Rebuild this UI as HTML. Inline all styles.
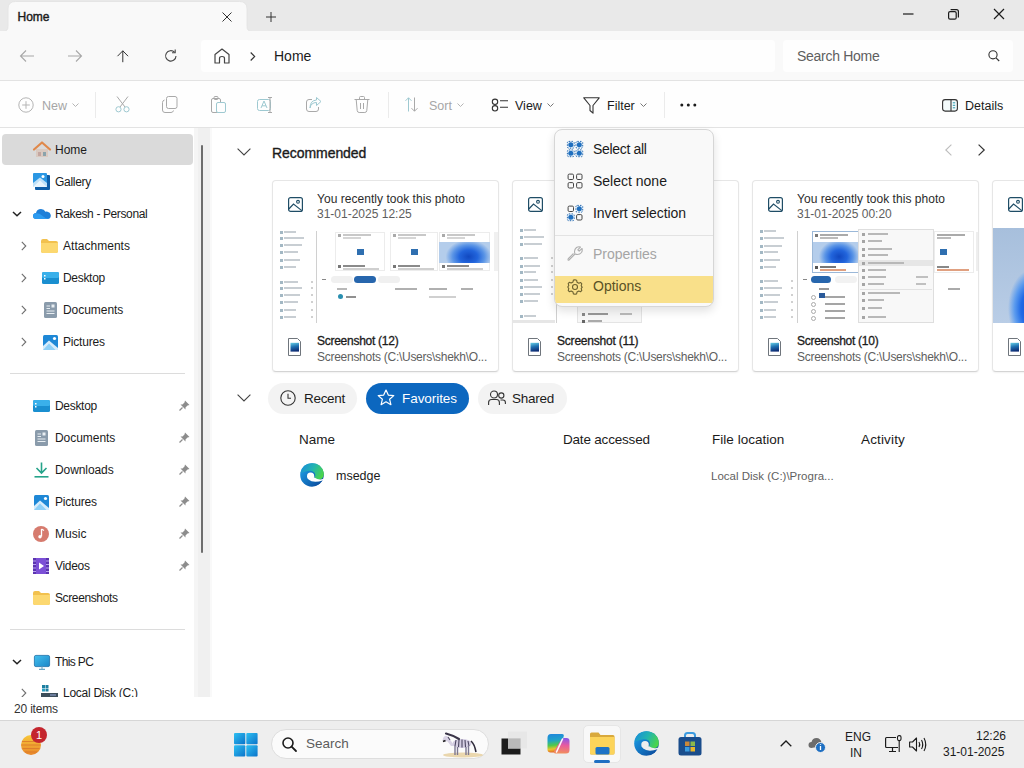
<!DOCTYPE html>
<html><head><meta charset="utf-8">
<style>
*{margin:0;padding:0;box-sizing:border-box}
html,body{width:1024px;height:768px;overflow:hidden;background:#fff;font-family:"Liberation Sans",sans-serif;color:#1b1b1b}
.a{position:absolute}
.t{position:absolute;white-space:nowrap;line-height:20px;height:20px}
svg{position:absolute;overflow:visible}
</style></head><body>

<!-- TAB BAR -->
<div class="a" style="left:0;top:0;width:1024px;height:31px;background:#e9e9e9"></div>
<svg style="left:0;top:0" width="260" height="32"><path d="M3 31.5Q8 31.5 8 26.5V9Q8 1.5 15.5 1.5H239.5Q247 1.5 247 9V26.5Q247 31.5 252 31.5Z" fill="#f9f9f9" stroke="#e2e2e2" stroke-width="0.8"/><rect x="0" y="31" width="260" height="2" fill="#f9f9f9"/></svg>
<div class="t" style="left:17.5px;top:7px;font-size:12px;-webkit-text-stroke:0.4px #1b1b1b;">Home</div>
<svg style="left:222px;top:11.5px" width="10" height="10"><path d="M0.5 0.5L9.5 9.5M9.5 0.5L0.5 9.5" stroke="#333" stroke-width="1"/></svg>
<svg style="left:265.5px;top:11.5px" width="10" height="10"><path d="M5 0V10M0 5H10" stroke="#333" stroke-width="1"/></svg>
<svg style="left:903px;top:13px" width="11" height="2"><path d="M0 1H10.5" stroke="#1b1b1b" stroke-width="1.2"/></svg>
<svg style="left:948px;top:9px" width="11" height="11"><rect x="0.6" y="2.6" width="7.6" height="7.6" rx="1.5" fill="none" stroke="#1b1b1b" stroke-width="1.2"/><path d="M2.6 0.6H8.5Q10.4 0.6 10.4 2.5V8.4" fill="none" stroke="#1b1b1b" stroke-width="1.2"/></svg>
<svg style="left:994px;top:9px" width="10" height="10"><path d="M0 0L10 10M10 0L0 10" stroke="#1b1b1b" stroke-width="1.2"/></svg>

<!-- NAV BAR -->
<div class="a" style="left:0;top:31px;width:1024px;height:49px;background:#f9f9f9"></div>
<div class="a" style="left:0;top:80px;width:1024px;height:1px;background:#e3e3e3"></div>
<svg style="left:20px;top:50px" width="14" height="12"><path d="M0.5 6H14M6 0.5L0.5 6L6 11.5" fill="none" stroke="#a8a8a8" stroke-width="1.1"/></svg>
<svg style="left:68px;top:50px" width="14" height="12"><path d="M0 6H13.5M8 0.5L13.5 6L8 11.5" fill="none" stroke="#a8a8a8" stroke-width="1.1"/></svg>
<svg style="left:116.5px;top:50px" width="12" height="13"><path d="M5.8 0.8V12.2M0.5 6.2L5.8 0.8L11.1 6.2" fill="none" stroke="#333" stroke-width="1"/></svg>
<svg style="left:164px;top:49px" width="14" height="14"><path d="M12 7A5.2 5.2 0 1 1 10.5 3.2" fill="none" stroke="#444" stroke-width="1.1"/><path d="M11.2 0.6V3.8H8" fill="none" stroke="#444" stroke-width="1.1"/></svg>
<div class="a" style="left:201px;top:40px;width:574px;height:32px;background:#fefefe;border-radius:4px"></div>
<svg style="left:214px;top:48px" width="16" height="16"><path d="M1 15V6.5L8 1L15 6.5V15H10.5V10.5Q10.5 8.5 8 8.5Q5.5 8.5 5.5 10.5V15Z" fill="none" stroke="#444" stroke-width="1.2" stroke-linejoin="round"/></svg>
<svg style="left:250px;top:52px" width="6" height="9"><path d="M0.7 0.5L4.7 4.5L0.7 8.5" fill="none" stroke="#333" stroke-width="1.1"/></svg>
<div class="t" style="left:274px;top:46px;font-size:14px;color:#1b1b1b">Home</div>
<div class="a" style="left:783px;top:40px;width:230px;height:32px;background:#fefefe;border-radius:4px"></div>
<div class="t" style="left:797px;top:46px;font-size:14px;color:#5f5f5f;letter-spacing:-0.281px;">Search Home</div>
<svg style="left:988px;top:50px" width="12" height="12"><circle cx="5" cy="4.8" r="4.1" fill="none" stroke="#333" stroke-width="1.1"/><path d="M8 7.8L11.2 11" stroke="#333" stroke-width="1.2"/></svg>

<!-- TOOLBAR -->
<div class="a" style="left:0;top:81px;width:1024px;height:46px;background:#fefefe"></div>
<div class="a" style="left:0;top:127px;width:1024px;height:1px;background:#e3e3e3"></div>

<svg style="left:18px;top:97px" width="16" height="16"><circle cx="8" cy="8" r="7.2" fill="none" stroke="#b5b5b5" stroke-width="1"/><path d="M8 4.2V11.8M4.2 8H11.8" stroke="#b5b5b5" stroke-width="1"/></svg>
<div class="t" style="left:42px;top:96px;font-size:12.5px;color:#a6a6a6">New</div>
<svg style="left:72px;top:103px" width="7" height="4"><path d="M0.5 0.5L3.5 3.5L6.5 0.5" fill="none" stroke="#b5b5b5" stroke-width="1"/></svg>
<div class="a" style="left:95px;top:92px;width:1px;height:26px;background:#ebebeb"></div>
<svg style="left:115px;top:96px" width="15" height="17"><path d="M2 0.5L10 11M13 0.5L5 11" stroke="#a9a9a9" stroke-width="1"/><circle cx="3.5" cy="13.3" r="2.6" fill="none" stroke="#9ec9d1" stroke-width="1"/><circle cx="11.5" cy="13.3" r="2.6" fill="none" stroke="#9ec9d1" stroke-width="1"/></svg>
<svg style="left:162px;top:96px" width="16" height="17"><rect x="4.5" y="0.5" width="10.5" height="12" rx="2" fill="none" stroke="#a9a9a9" stroke-width="1"/><path d="M2.5 4Q0.5 4.5 0.5 6.5V14Q0.5 16.5 3 16.5H9Q11 16.5 11.5 14.5" fill="none" stroke="#a9a9a9" stroke-width="1"/></svg>
<svg style="left:211px;top:96px" width="15" height="17"><rect x="0.5" y="2.5" width="9" height="14" rx="1.5" fill="none" stroke="#a9a9a9" stroke-width="1"/><rect x="5.5" y="6.5" width="9" height="10" rx="1.5" fill="#fefefe" stroke="#9ec9d1" stroke-width="1"/><rect x="3" y="0.5" width="4" height="3" rx="1" fill="none" stroke="#a9a9a9" stroke-width="1"/></svg>
<svg style="left:257px;top:97px" width="17" height="16"><rect x="0.5" y="2.5" width="13" height="11" rx="2" fill="none" stroke="#9ec9d1" stroke-width="1"/><path d="M4 11L7 4L10 11M5 8.8H9" fill="none" stroke="#9ec9d1" stroke-width="1"/><path d="M13 0.5V15.5M11 0.5H15M11 15.5H15" fill="none" stroke="#a9a9a9" stroke-width="1"/></svg>
<svg style="left:306px;top:97px" width="16" height="15"><path d="M6 2.5H3Q0.5 2.5 0.5 5V12Q0.5 14.5 3 14.5H10Q12.5 14.5 12.5 12V10" fill="none" stroke="#a9a9a9" stroke-width="1"/><path d="M4 11Q5 5.5 10.5 5.5V8.5L15 4.5L10.5 0.5V3Q4 3.5 4 11Z" fill="none" stroke="#9ec9d1" stroke-width="1"/></svg>
<svg style="left:354px;top:96px" width="16" height="17"><path d="M0.5 3.5H15.5M5.5 3.5V1.5Q5.5 0.5 6.5 0.5H9.5Q10.5 0.5 10.5 1.5V3.5M2.2 3.5L3.2 14.5Q3.4 16.5 5.2 16.5H10.8Q12.6 16.5 12.8 14.5L13.8 3.5M6.5 7V13M9.5 7V13" fill="none" stroke="#a9a9a9" stroke-width="1"/></svg>
<div class="a" style="left:388px;top:92px;width:1px;height:26px;background:#ebebeb"></div>
<svg style="left:405px;top:97px" width="13" height="15"><path d="M3.5 14.5V0.8M0.5 3.8L3.5 0.8L6.5 3.8" fill="none" stroke="#9ec9d1" stroke-width="1"/><path d="M9.5 0.5V14.2M6.5 11.2L9.5 14.2L12.5 11.2" fill="none" stroke="#a9a9a9" stroke-width="1"/></svg>
<div class="t" style="left:429px;top:96px;font-size:12.5px;color:#a6a6a6">Sort</div>
<svg style="left:457px;top:103px" width="7" height="4"><path d="M0.5 0.5L3.5 3.5L6.5 0.5" fill="none" stroke="#b5b5b5" stroke-width="1"/></svg>
<svg style="left:491px;top:98px" width="18" height="14"><circle cx="4" cy="3.8" r="2.7" fill="none" stroke="#333" stroke-width="1.1"/><circle cx="4" cy="10.3" r="2.7" fill="none" stroke="#333" stroke-width="1.1"/><path d="M9 2.8H17M9 9.3H17" stroke="#333" stroke-width="1.1"/></svg>
<div class="t" style="left:515px;top:96px;font-size:12.5px;color:#1b1b1b">View</div>
<svg style="left:547px;top:103px" width="7" height="4"><path d="M0.5 0.5L3.5 3.5L6.5 0.5" fill="none" stroke="#777" stroke-width="1"/></svg>
<svg style="left:583px;top:97px" width="17" height="17"><path d="M0.8 0.8H16.2L10 8.5V16.2L7 13.5V8.5Z" fill="none" stroke="#333" stroke-width="1.1" stroke-linejoin="round"/></svg>
<div class="t" style="left:607px;top:96px;font-size:12.5px;color:#1b1b1b">Filter</div>
<svg style="left:640px;top:103px" width="7" height="4"><path d="M0.5 0.5L3.5 3.5L6.5 0.5" fill="none" stroke="#777" stroke-width="1"/></svg>
<div class="a" style="left:664px;top:92px;width:1px;height:26px;background:#ebebeb"></div>
<svg style="left:680px;top:103px" width="17" height="4"><circle cx="1.8" cy="2" r="1.5" fill="#1b1b1b"/><circle cx="8.3" cy="2" r="1.5" fill="#1b1b1b"/><circle cx="14.8" cy="2" r="1.5" fill="#1b1b1b"/></svg>
<svg style="left:942px;top:99px" width="16" height="13"><rect x="0.6" y="0.6" width="14.8" height="11.5" rx="2.5" fill="#f3fafb" stroke="#333" stroke-width="1.1"/><path d="M9 0.6V12.1" stroke="#333" stroke-width="1.1"/><path d="M10.8 3.8H13.2M10.8 6.3H13.2M10.8 8.8H13.2" stroke="#2a9bb0" stroke-width="1"/></svg>
<div class="t" style="left:965px;top:96px;font-size:12.5px;color:#1b1b1b">Details</div>


<!-- SIDEBAR -->
<div class="a" style="left:2px;top:134px;width:191px;height:31px;background:#dadada;border-radius:4px"></div>
<div class="a" style="left:194px;top:128px;width:16px;height:569px;background:#f0f0f0"></div><div class="a" style="left:194px;top:128px;width:4px;height:569px;background:#f5f5f5"></div><div class="a" style="left:210px;top:128px;width:2px;height:569px;background:#f9f9f9"></div>
<div class="a" style="left:201px;top:145px;width:2px;height:408px;background:#6d6d6d;border-radius:1px"></div>
<svg style="left:33px;top:141px" width="18" height="17"><path d="M3 8V16H15V8" fill="#d9c9c0"/><rect x="5" y="11" width="3" height="4" fill="#c4a6a0"/><rect x="10" y="11" width="3" height="4" fill="#8aa3ac"/><path d="M1 8.5L9 1.5L17 8.5" fill="none" stroke="#e0884a" stroke-width="2.2" stroke-linecap="round" stroke-linejoin="round"/></svg>
<div class="t" style="left:55px;top:140px;font-size:12px;color:#1b1b1b">Home</div>
<svg style="left:33px;top:173px" width="17" height="17"><rect x="2" y="2" width="15" height="15" rx="1" fill="#0f5ea8"/><rect x="0" y="0" width="14" height="14" rx="1" fill="#2b97e3"/><path d="M0 14V10L7 4.5L14 10V14Z" fill="#bfe1f8"/><path d="M0 14L7 7.5L14 14Z" fill="#e9f5fd"/><circle cx="10" cy="3.5" r="1.5" fill="#fff"/></svg>
<div class="t" style="left:55px;top:172px;font-size:12px;color:#1b1b1b;letter-spacing:-0.302px;">Gallery</div>
<svg style="left:12px;top:211px" width="10" height="6"><path d="M1 1L5 4.8L9 1" fill="none" stroke="#222" stroke-width="1.5"/></svg>
<svg style="left:33px;top:208px" width="18" height="11"><path d="M3.5 11Q0 11 0 8Q0 5.3 3 5Q3.8 1 8 1Q11.2 1 12.5 3.8Q13.5 3.5 14.5 3.7Q17.2 4.3 17.8 7Q18 11 14.5 11Z" fill="#1e7fd8"/><path d="M3.5 11Q0 11 0 8Q0 6 2 5.3Q6 4.5 9 7.5Q12 10.5 15.5 10.8L14.5 11Z" fill="#2d9bf0"/></svg>
<div class="t" style="left:55px;top:204px;font-size:12px;color:#1b1b1b;letter-spacing:-0.378px;">Rakesh - Personal</div>
<svg style="left:21px;top:241px" width="6" height="10"><path d="M0.8 0.8L4.8 5L0.8 9.2" fill="none" stroke="#6e6e6e" stroke-width="1.1"/></svg>
<svg style="left:41px;top:239px" width="17" height="14"><path d="M0 2Q0 0 2 0H6L8 2H15Q17 2 17 4V12Q17 14 15 14H2Q0 14 0 12Z" fill="#f2c14e"/><path d="M0 4H17V12Q17 14 15 14H2Q0 14 0 12Z" fill="#fcd870"/></svg>
<div class="t" style="left:63px;top:236px;font-size:12px;color:#1b1b1b;letter-spacing:0.027px;">Attachments</div>
<svg style="left:21px;top:273px" width="6" height="10"><path d="M0.8 0.8L4.8 5L0.8 9.2" fill="none" stroke="#6e6e6e" stroke-width="1.1"/></svg>
<svg style="left:42px;top:272px" width="17" height="12"><rect x="0" y="0" width="17" height="12" rx="1.5" fill="#1a8fd0"/><rect x="0" y="0" width="17" height="6" rx="1.5" fill="#3ab0ea"/><rect x="2" y="3" width="1.5" height="1.5" fill="#fff"/><rect x="2" y="6" width="1.5" height="1.5" fill="#fff"/></svg>
<div class="t" style="left:63px;top:268px;font-size:12px;color:#1b1b1b;letter-spacing:-0.304px;">Desktop</div>
<svg style="left:21px;top:305px" width="6" height="10"><path d="M0.8 0.8L4.8 5L0.8 9.2" fill="none" stroke="#6e6e6e" stroke-width="1.1"/></svg>
<svg style="left:44px;top:302px" width="13" height="16"><rect x="0" y="0" width="13" height="16" rx="1.5" fill="#8a9bab"/><path d="M2.5 4H6M2.5 6.5H6M2.5 9H10.5M2.5 11.5H10.5" stroke="#e8eef2" stroke-width="1.2"/><rect x="7.5" y="2.5" width="3" height="3" fill="#e8eef2"/></svg>
<div class="t" style="left:63px;top:300px;font-size:12px;color:#1b1b1b;letter-spacing:-0.045px;">Documents</div>
<svg style="left:21px;top:337px" width="6" height="10"><path d="M0.8 0.8L4.8 5L0.8 9.2" fill="none" stroke="#6e6e6e" stroke-width="1.1"/></svg>
<svg style="left:43px;top:335px" width="15" height="15"><rect x="0" y="0" width="15" height="15" rx="1.5" fill="#1e88d6"/><path d="M0 15V11L6 5.5L15 13V15Z" fill="#d7ecfb"/><path d="M0 15L6 8.5L12.5 15Z" fill="#8fd0f7"/><circle cx="11.5" cy="3.5" r="1.6" fill="#fff"/></svg>
<div class="t" style="left:63px;top:332px;font-size:12px;color:#1b1b1b;letter-spacing:-0.207px;">Pictures</div>
<div class="a" style="left:10px;top:373px;width:175px;height:1px;background:#dcdcdc"></div>
<svg style="left:33px;top:400px" width="17" height="12"><rect x="0" y="0" width="17" height="12" rx="1.5" fill="#1a8fd0"/><rect x="0" y="0" width="17" height="6" rx="1.5" fill="#3ab0ea"/><rect x="2" y="3" width="1.5" height="1.5" fill="#fff"/><rect x="2" y="6" width="1.5" height="1.5" fill="#fff"/></svg>
<div class="t" style="left:55px;top:396px;font-size:12px;color:#1b1b1b;letter-spacing:-0.304px;">Desktop</div>
<svg style="left:179px;top:400px" width="11" height="11"><path d="M6 0.5L10.5 5L8.5 5.5L6.5 7.5L6.5 9.5L1.5 4.5L3.5 4.5L5.5 2.5Z" fill="#8c8c8c"/><path d="M3.5 7.5L0.5 10.5" stroke="#8c8c8c" stroke-width="1.2"/></svg>
<svg style="left:35px;top:430px" width="13" height="16"><rect x="0" y="0" width="13" height="16" rx="1.5" fill="#8a9bab"/><path d="M2.5 4H6M2.5 6.5H6M2.5 9H10.5M2.5 11.5H10.5" stroke="#e8eef2" stroke-width="1.2"/><rect x="7.5" y="2.5" width="3" height="3" fill="#e8eef2"/></svg>
<div class="t" style="left:55px;top:428px;font-size:12px;color:#1b1b1b;letter-spacing:-0.045px;">Documents</div>
<svg style="left:179px;top:432px" width="11" height="11"><path d="M6 0.5L10.5 5L8.5 5.5L6.5 7.5L6.5 9.5L1.5 4.5L3.5 4.5L5.5 2.5Z" fill="#8c8c8c"/><path d="M3.5 7.5L0.5 10.5" stroke="#8c8c8c" stroke-width="1.2"/></svg>
<svg style="left:34px;top:462px" width="15" height="16"><path d="M7.5 0.5V11M2.5 6L7.5 11L12.5 6" fill="none" stroke="#26a38a" stroke-width="1.6"/><path d="M0.5 14.8H14.5" stroke="#26a38a" stroke-width="1.6"/></svg>
<div class="t" style="left:55px;top:460px;font-size:12px;color:#1b1b1b;letter-spacing:-0.086px;">Downloads</div>
<svg style="left:179px;top:464px" width="11" height="11"><path d="M6 0.5L10.5 5L8.5 5.5L6.5 7.5L6.5 9.5L1.5 4.5L3.5 4.5L5.5 2.5Z" fill="#8c8c8c"/><path d="M3.5 7.5L0.5 10.5" stroke="#8c8c8c" stroke-width="1.2"/></svg>
<svg style="left:34px;top:495px" width="15" height="15"><rect x="0" y="0" width="15" height="15" rx="1.5" fill="#1e88d6"/><path d="M0 15V11L6 5.5L15 13V15Z" fill="#d7ecfb"/><path d="M0 15L6 8.5L12.5 15Z" fill="#8fd0f7"/><circle cx="11.5" cy="3.5" r="1.6" fill="#fff"/></svg>
<div class="t" style="left:55px;top:492px;font-size:12px;color:#1b1b1b;letter-spacing:-0.207px;">Pictures</div>
<svg style="left:179px;top:496px" width="11" height="11"><path d="M6 0.5L10.5 5L8.5 5.5L6.5 7.5L6.5 9.5L1.5 4.5L3.5 4.5L5.5 2.5Z" fill="#8c8c8c"/><path d="M3.5 7.5L0.5 10.5" stroke="#8c8c8c" stroke-width="1.2"/></svg>
<svg style="left:33px;top:526px" width="16" height="16"><circle cx="8" cy="8" r="8" fill="#d67b6e"/><path d="M8.5 3V10.5" stroke="#fff" stroke-width="1.3"/><circle cx="7" cy="10.8" r="1.7" fill="#fff"/><path d="M8.5 3L11 4.5" stroke="#fff" stroke-width="1.2"/></svg>
<div class="t" style="left:55px;top:524px;font-size:12px;color:#1b1b1b;letter-spacing:0.031px;">Music</div>
<svg style="left:179px;top:528px" width="11" height="11"><path d="M6 0.5L10.5 5L8.5 5.5L6.5 7.5L6.5 9.5L1.5 4.5L3.5 4.5L5.5 2.5Z" fill="#8c8c8c"/><path d="M3.5 7.5L0.5 10.5" stroke="#8c8c8c" stroke-width="1.2"/></svg>
<svg style="left:33px;top:558px" width="16" height="16"><rect x="0" y="0" width="16" height="16" rx="2" fill="#7b4fd6"/><rect x="0" y="0" width="3" height="16" fill="#5b34b0"/><rect x="13" y="0" width="3" height="16" fill="#5b34b0"/><path d="M0 3H3M0 6.5H3M0 10H3M0 13.5H3M13 3H16M13 6.5H16M13 10H16M13 13.5H16" stroke="#b9a3f0" stroke-width="1"/><path d="M6 4.5L11 8L6 11.5Z" fill="#fff"/></svg>
<div class="t" style="left:55px;top:556px;font-size:12px;color:#1b1b1b;letter-spacing:-0.314px;">Videos</div>
<svg style="left:179px;top:560px" width="11" height="11"><path d="M6 0.5L10.5 5L8.5 5.5L6.5 7.5L6.5 9.5L1.5 4.5L3.5 4.5L5.5 2.5Z" fill="#8c8c8c"/><path d="M3.5 7.5L0.5 10.5" stroke="#8c8c8c" stroke-width="1.2"/></svg>
<svg style="left:33px;top:591px" width="17" height="14"><path d="M0 2Q0 0 2 0H6L8 2H15Q17 2 17 4V12Q17 14 15 14H2Q0 14 0 12Z" fill="#f2c14e"/><path d="M0 4H17V12Q17 14 15 14H2Q0 14 0 12Z" fill="#fcd870"/></svg>
<div class="t" style="left:55px;top:588px;font-size:12px;color:#1b1b1b;letter-spacing:-0.382px;">Screenshots</div>
<div class="a" style="left:10px;top:629px;width:175px;height:1px;background:#dcdcdc"></div>
<svg style="left:12px;top:659px" width="10" height="6"><path d="M1 1L5 4.8L9 1" fill="none" stroke="#222" stroke-width="1.5"/></svg>
<svg style="left:34px;top:654.5px" width="16" height="15"><defs><linearGradient id="pcg" x1="0" y1="0" x2="1" y2="1"><stop offset="0" stop-color="#44c0ee"/><stop offset="1" stop-color="#1a86c8"/></linearGradient></defs><rect x="0.4" y="0.4" width="15.2" height="11.2" rx="1.5" fill="url(#pcg)" stroke="#1a6fa8" stroke-width="0.8"/><path d="M8 11.6V14M5 14.4H11" stroke="#6aa8c8" stroke-width="1.1"/></svg>
<div class="t" style="left:55px;top:652px;font-size:12px;color:#1b1b1b;letter-spacing:-0.627px;">This PC</div>
<div class="a" style="left:0;top:680px;width:194px;height:17px;overflow:hidden"><svg style="left:21px;top:8px" width="6" height="10"><path d="M0.8 0.8L4.8 5L0.8 9.2" fill="none" stroke="#6e6e6e" stroke-width="1.1"/></svg><svg style="left:41px;top:5px" width="17" height="13"><rect x="1" y="0" width="3" height="3" fill="#1e7fa0"/><rect x="4.5" y="0" width="3" height="3" fill="#1e7fa0"/><rect x="1" y="3.5" width="3" height="3" fill="#2a9ec0"/><rect x="4.5" y="3.5" width="3" height="3" fill="#1e7fa0"/><rect x="0" y="8" width="17" height="4" fill="#3d4e5a"/><rect x="9" y="9.5" width="6" height="1" fill="#9ad"/></svg><div class="t" style="left:63px;top:3px;font-size:12px;color:#1b1b1b;letter-spacing:-0.259px;">Local Disk (C:)</div></div>

<!-- STATUS -->
<div class="t" style="left:14px;top:699px;font-size:12px;color:#333;letter-spacing:-0.182px;">20 items</div>

<!-- TASKBAR -->
<div class="a" style="left:0;top:720px;width:1024px;height:48px;background:#eeeeee;border-top:1px solid #d6d6d6"></div>
<svg style="left:20px;top:734px" width="24" height="21"><defs><linearGradient id="wg" x1="0" y1="0" x2="0" y2="1"><stop offset="0" stop-color="#f8c73a"/><stop offset="1" stop-color="#e8862a"/></linearGradient></defs><circle cx="11" cy="11" r="10" fill="url(#wg)"/><path d="M2 7.5H20M1.5 11H20.5M2.5 14.5H19.5M5 18H17" stroke="#d9772b" stroke-width="1.1" opacity="0.8"/></svg>
<div class="a" style="left:31px;top:727px;width:16px;height:16px;border-radius:50%;background:#c4262e;color:#fff;font-size:11px;line-height:16px;text-align:center">1</div>
<svg style="left:234px;top:733px" width="24" height="24"><defs><linearGradient id="sg" x1="0" y1="0" x2="1" y2="1"><stop offset="0" stop-color="#2ec0f2"/><stop offset="1" stop-color="#0a72c9"/></linearGradient></defs><rect x="0" y="0" width="11.3" height="11.3" rx="1" fill="url(#sg)"/><rect x="12.3" y="0" width="11.3" height="11.3" rx="1" fill="url(#sg)"/><rect x="0" y="12.3" width="11.3" height="11.3" rx="1" fill="url(#sg)"/><rect x="12.3" y="12.3" width="11.3" height="11.3" rx="1" fill="url(#sg)"/></svg>
<div class="a" style="left:271px;top:729px;width:218px;height:30px;border-radius:15px;background:#fbfbfb;border:1px solid #dedede"></div>
<svg style="left:282px;top:737px" width="15" height="15"><circle cx="6" cy="6" r="5" fill="none" stroke="#1b1b1b" stroke-width="1.6"/><path d="M9.6 9.6L14 14" stroke="#1b1b1b" stroke-width="1.8" stroke-linecap="round"/></svg>
<div class="t" style="left:306px;top:734px;font-size:13.5px;color:#5c5c5c">Search</div>
<svg style="left:436px;top:724px" width="52" height="36"><ellipse cx="27" cy="31" rx="20" ry="2.6" fill="#e6d0a0" opacity="0.85"/><path d="M18 22Q16 18 13 14Q11 11 9 12Q6 14 7 17.5Q8.5 18.5 11 17Q13 19 15 22Z" fill="#d8d2e4"/><ellipse cx="26" cy="19.5" rx="9.5" ry="4.6" fill="#d4cde2"/><path d="M10 9.5Q16 11 23 15" fill="none" stroke="#3a3548" stroke-width="2.2" stroke-linecap="round"/><path d="M7 17.5L9.5 16.5" stroke="#222" stroke-width="1.8"/><path d="M19 22V31M21.5 23V31M30 23V31M32.5 22V31" stroke="#7d7892" stroke-width="1.4"/><path d="M20 16L19 22M23 16L22.5 23M26 15.5V23.5M29 16L29.5 23M32 17L33 22M12 13L14 16" stroke="#4b4660" stroke-width="1.1"/><path d="M35 17Q38.5 20 40 28" fill="none" stroke="#2e2a3a" stroke-width="1.6"/></svg>
<svg style="left:501px;top:731px" width="27" height="25"><rect x="0.5" y="7.5" width="19" height="16" fill="#1c1c1c"/><rect x="7" y="0.5" width="19" height="17" fill="#e6e6e6" opacity="0.9"/><rect x="7" y="7.5" width="12.5" height="10" fill="#b9b9b9"/></svg>
<svg style="left:547px;top:733px" width="23" height="21"><defs><linearGradient id="cpl" x1="0.2" y1="0" x2="0.3" y2="1"><stop offset="0" stop-color="#1f86dc"/><stop offset="0.35" stop-color="#1fa3c8"/><stop offset="0.62" stop-color="#52c94a"/><stop offset="0.82" stop-color="#e9c62a"/><stop offset="1" stop-color="#e4622a"/></linearGradient><linearGradient id="cpr" x1="0.5" y1="0" x2="0.4" y2="1"><stop offset="0" stop-color="#8b56e8"/><stop offset="0.45" stop-color="#e85aa0"/><stop offset="1" stop-color="#f2905a"/></linearGradient></defs><path d="M4 1H15Q17.5 1 16.5 4L12 17.5Q11.3 19.5 9 19.5H3.5Q0.5 19.5 0.5 16.5V5Q0.5 1 4 1Z" fill="url(#cpl)"/><path d="M14 7Q14.8 5 17 5H19.5Q22.5 5 22.5 8V17Q22.5 20.5 19 20.5H8.5Q6.2 20.5 7.2 18Z" fill="url(#cpr)"/><path d="M15.5 6L9.5 19" stroke="#fff" stroke-width="1.6" stroke-linecap="round" opacity="0.95"/></svg>
<div class="a" style="left:583px;top:725px;width:38px;height:38px;border-radius:5px;background:#f8f8f8;border:1px solid #e6e6e6"></div>
<svg style="left:590px;top:732px" width="25" height="23"><path d="M0 2Q0 0.5 1.5 0.5H8.5L10.5 3H23Q24.5 3 24.5 4.5V21Q24.5 22.5 23 22.5H1.5Q0 22.5 0 21Z" fill="#d9a93c"/><path d="M0 5H24.5V21Q24.5 22.5 23 22.5H1.5Q0 22.5 0 21Z" fill="#fcd45a"/><rect x="5.5" y="15" width="14" height="7.5" rx="1.5" fill="#1d73c6"/></svg>
<div class="a" style="left:594px;top:760px;width:16px;height:3px;border-radius:2px;background:#1e6fc2"></div>
<svg style="left:634px;top:731px" width="25" height="25" viewBox="0 0 24 24"><defs><linearGradient id="teb" x1="0" y1="0.2" x2="0.8" y2="1"><stop offset="0" stop-color="#1c9ee6"/><stop offset="1" stop-color="#0b4c9e"/></linearGradient><linearGradient id="teg" x1="0" y1="0.2" x2="1" y2="0.6"><stop offset="0" stop-color="#1a8ed8"/><stop offset="0.5" stop-color="#22b4b0"/><stop offset="1" stop-color="#4cd648"/></linearGradient></defs><circle cx="12" cy="12" r="11.8" fill="url(#teb)"/><path d="M0.6 10Q2 0.4 12 0.2Q21.5 0.3 23.7 9.5Q24.5 15.8 19.5 16.6Q15.8 17 14.4 14.6Q16.4 11.8 14 9.2Q10.5 6.8 5.5 8.6Q2.5 9.8 0.6 10Z" fill="url(#teg)"/><circle cx="10.6" cy="13.2" r="3.6" fill="#eeeeee"/><path d="M8.5 16.5Q13.5 20.8 23.2 17.2L23.6 15.8Q19 17.6 14.4 14.6L12 15Z" fill="#eeeeee"/><path d="M23.2 17.2Q19.5 23.8 12 23.9L24 24Z" fill="#eeeeee"/></svg>
<svg style="left:678px;top:732px" width="24" height="24"><path d="M7 5V3.5Q7 1 9.5 1H14.5Q17 1 17 3.5V5" fill="none" stroke="#3b9be0" stroke-width="2"/><rect x="0.5" y="5" width="23" height="18.5" rx="2.5" fill="#1a4d8c"/><rect x="7" y="9.5" width="4.5" height="4.5" fill="#c8883a"/><rect x="12.5" y="9.5" width="4.5" height="4.5" fill="#8cb84a"/><rect x="7" y="15" width="4.5" height="4.5" fill="#3a9ce0"/><rect x="12.5" y="15" width="4.5" height="4.5" fill="#e8b62a"/></svg>
<svg style="left:780px;top:740px" width="12" height="7"><path d="M0.7 6.3L6 1L11.3 6.3" fill="none" stroke="#1b1b1b" stroke-width="1.3"/></svg>
<svg style="left:808px;top:735px" width="19" height="18"><path d="M3.5 13Q0.5 13 0.5 10Q0.5 7 3.5 7Q4.5 3 8.5 3Q12.5 3 13.5 7.5Q16 8 16 10.5" fill="#6c6c6c"/><circle cx="12.5" cy="12.5" r="5" fill="#1e6fc2" stroke="#eee" stroke-width="1"/><path d="M12.5 11V15M12.5 9.3V9.9" stroke="#fff" stroke-width="1.3"/></svg>
<div class="t" style="left:845px;top:727px;font-size:12px;color:#1b1b1b">ENG</div>
<div class="t" style="left:850px;top:743px;font-size:12px;color:#1b1b1b">IN</div>
<svg style="left:885px;top:735px" width="18" height="18"><path d="M11 2.5H1.5Q0.6 2.5 0.6 3.5V11.5Q0.6 12.5 1.5 12.5H13" fill="none" stroke="#1b1b1b" stroke-width="1.2"/><path d="M4 16.5H11M7.5 12.5V16.5" stroke="#1b1b1b" stroke-width="1.2"/><rect x="12.5" y="0.6" width="3.5" height="5" rx="1.5" fill="none" stroke="#1b1b1b" stroke-width="1.1"/><path d="M14.2 5.6V17" stroke="#1b1b1b" stroke-width="1.1"/></svg>
<svg style="left:909px;top:737px" width="18" height="15"><path d="M0.6 5H3.5L7.5 1V14L3.5 10H0.6Z" fill="none" stroke="#1b1b1b" stroke-width="1.1" stroke-linejoin="round"/><path d="M10 5Q11.5 7.5 10 10M12.5 3Q15 7.5 12.5 12M15 1Q18.5 7.5 15 14" fill="none" stroke="#1b1b1b" stroke-width="1.1"/></svg>
<div class="t" style="left:976px;top:726px;font-size:12px;color:#1b1b1b">12:26</div>
<div class="t" style="left:943px;top:742px;font-size:12px;color:#1b1b1b">31-01-2025</div>

<svg style="left:237px;top:148px" width="14" height="8"><path d="M0.6 0.6L7 7L13.4 0.6" fill="none" stroke="#444" stroke-width="1.1"/></svg>
<div class="t" style="left:272px;top:143px;font-size:14px;color:#1b1b1b;-webkit-text-stroke:0.35px #1b1b1b;letter-spacing:-0.058px;">Recommended</div>
<svg style="left:945px;top:144px" width="7" height="12"><path d="M6.4 0.6L0.8 6L6.4 11.4" fill="none" stroke="#bdbdbd" stroke-width="1.1"/></svg>
<svg style="left:978px;top:144px" width="7" height="12"><path d="M0.6 0.6L6.2 6L0.6 11.4" fill="none" stroke="#333" stroke-width="1.2"/></svg>
<!--CARDS-->
<div class="a" style="left:272px;top:180px;width:227px;height:191.5px;background:#fff;border:1px solid #e6e6e6;border-bottom-color:#d4d4d4;border-radius:4px;box-shadow:0 1px 2px rgba(0,0,0,0.06)"></div>
<svg style="left:288px;top:197px" width="15" height="15"><rect x="0.6" y="0.6" width="13.8" height="13.8" rx="2" fill="none" stroke="#1f4d66" stroke-width="1.2"/><path d="M0.8 12L5.5 7L13.8 13.6" fill="none" stroke="#1f4d66" stroke-width="1.2"/><circle cx="10" cy="4.8" r="1.4" fill="none" stroke="#1f4d66" stroke-width="1.1"/></svg>
<div class="t" style="left:317px;top:188.5px;font-size:12px;color:#2b2b2b;letter-spacing:0.036px;">You recently took this photo</div>
<div class="t" style="left:317px;top:204px;font-size:12px;color:#5e5e5e">31-01-2025 12:25</div>
<div class="a" style="left:273px;top:228px;width:225px;height:95px;overflow:hidden;background:#fff">
<div class="a" style="left:7px;top:3px;width:3px;height:3px;background:#a3b8c4;"></div><div class="a" style="left:11px;top:3px;width:12px;height:2px;background:#c8ced3;"></div><div class="a" style="left:7px;top:9px;width:3px;height:3px;background:#a3b8c4;"></div><div class="a" style="left:11px;top:9px;width:20px;height:2px;background:#c8ced3;"></div><div class="a" style="left:7px;top:16px;width:3px;height:3px;background:#a3b8c4;"></div><div class="a" style="left:11px;top:16px;width:18px;height:2px;background:#c8ced3;"></div><div class="a" style="left:7px;top:23px;width:3px;height:3px;background:#a3b8c4;"></div><div class="a" style="left:11px;top:23px;width:14px;height:2px;background:#c8ced3;"></div><div class="a" style="left:7px;top:31px;width:3px;height:3px;background:#a3b8c4;"></div><div class="a" style="left:11px;top:31px;width:16px;height:2px;background:#c8ced3;"></div><div class="a" style="left:7px;top:38px;width:3px;height:3px;background:#a3b8c4;"></div><div class="a" style="left:11px;top:38px;width:12px;height:2px;background:#c8ced3;"></div><div class="a" style="left:7px;top:53px;width:3px;height:3px;background:#a3b8c4;"></div><div class="a" style="left:11px;top:53px;width:14px;height:2px;background:#c8ced3;"></div><div class="a" style="left:38px;top:53px;width:2px;height:2px;background:#d0d0d0;"></div><div class="a" style="left:7px;top:59px;width:3px;height:3px;background:#a3b8c4;"></div><div class="a" style="left:11px;top:59px;width:18px;height:2px;background:#c8ced3;"></div><div class="a" style="left:38px;top:59px;width:2px;height:2px;background:#d0d0d0;"></div><div class="a" style="left:7px;top:66px;width:3px;height:3px;background:#a3b8c4;"></div><div class="a" style="left:11px;top:66px;width:16px;height:2px;background:#c8ced3;"></div><div class="a" style="left:38px;top:66px;width:2px;height:2px;background:#d0d0d0;"></div><div class="a" style="left:7px;top:73px;width:3px;height:3px;background:#a3b8c4;"></div><div class="a" style="left:11px;top:73px;width:14px;height:2px;background:#c8ced3;"></div><div class="a" style="left:38px;top:73px;width:2px;height:2px;background:#d0d0d0;"></div><div class="a" style="left:7px;top:81px;width:3px;height:3px;background:#a3b8c4;"></div><div class="a" style="left:11px;top:81px;width:12px;height:2px;background:#c8ced3;"></div><div class="a" style="left:38px;top:81px;width:2px;height:2px;background:#d0d0d0;"></div><div class="a" style="left:7px;top:88px;width:3px;height:3px;background:#a3b8c4;"></div><div class="a" style="left:11px;top:88px;width:12px;height:2px;background:#c8ced3;"></div><div class="a" style="left:38px;top:88px;width:2px;height:2px;background:#d0d0d0;"></div><div class="a" style="left:43px;top:3px;width:1px;height:92px;background:#d0d0d0;"></div>
<div class="a" style="left:62px;top:4px;width:50px;height:39px;background:#fff;border:1px solid #ececec"></div>
<div class="a" style="left:65px;top:6px;width:3px;height:3px;background:#aaa;"></div>
<div class="a" style="left:70px;top:6px;width:28px;height:2px;background:#c8c8c8;"></div>
<div class="a" style="left:70px;top:9px;width:18px;height:2px;background:#d5d5d5;"></div>
<div class="a" style="left:84px;top:21px;width:7px;height:6px;background:#2f6fb0;"></div>
<div class="a" style="left:65px;top:37px;width:3px;height:3px;background:#777;"></div>
<div class="a" style="left:70px;top:37px;width:22px;height:2px;background:#8a8a8a;"></div>
<div class="a" style="left:70px;top:40px;width:36px;height:2px;background:#cfcfcf;"></div>
<div class="a" style="left:117px;top:4px;width:48px;height:39px;background:#fff;border:1px solid #ececec"></div>
<div class="a" style="left:120px;top:6px;width:3px;height:3px;background:#aaa;"></div>
<div class="a" style="left:125px;top:6px;width:28px;height:2px;background:#c8c8c8;"></div>
<div class="a" style="left:125px;top:9px;width:18px;height:2px;background:#d5d5d5;"></div>
<div class="a" style="left:138px;top:21px;width:7px;height:6px;background:#2f6fb0;"></div>
<div class="a" style="left:120px;top:37px;width:3px;height:3px;background:#777;"></div>
<div class="a" style="left:125px;top:37px;width:22px;height:2px;background:#8a8a8a;"></div>
<div class="a" style="left:125px;top:40px;width:36px;height:2px;background:#cfcfcf;"></div>
<div class="a" style="left:166px;top:4px;width:51px;height:39px;background:#fff;border:1px solid #ececec"></div>
<div class="a" style="left:169px;top:6px;width:3px;height:3px;background:#aaa;"></div>
<div class="a" style="left:174px;top:6px;width:28px;height:2px;background:#c8c8c8;"></div>
<div class="a" style="left:174px;top:9px;width:18px;height:2px;background:#d5d5d5;"></div>
<div class="a" style="left:166px;top:14px;width:51px;height:21px;background:radial-gradient(ellipse 45% 80% at 58% 70%,#1148c0 0%,#2265dc 40%,#5b95e6 70%,rgba(180,205,235,1) 100%);"></div>
<div class="a" style="left:169px;top:37px;width:3px;height:3px;background:#777;"></div>
<div class="a" style="left:174px;top:37px;width:22px;height:2px;background:#8a8a8a;"></div>
<div class="a" style="left:174px;top:40px;width:36px;height:2px;background:#cfcfcf;"></div>
<div class="a" style="left:221px;top:4px;width:4px;height:39px;background:#f0f0f0;"></div>
<div class="a" style="left:49px;top:51px;width:4px;height:1px;background:#888;"></div>
<div class="a" style="left:58px;top:48px;width:22px;height:7px;background:#f0f0f0;border-radius:4px"></div>
<div class="a" style="left:81px;top:48px;width:22px;height:7px;background:#2766ad;border-radius:4px"></div>
<div class="a" style="left:105px;top:48px;width:22px;height:7px;background:#f0f0f0;border-radius:4px"></div>
<div class="a" style="left:64px;top:60px;width:10px;height:2px;background:#b8b8b8;"></div>
<div class="a" style="left:122px;top:60px;width:22px;height:2px;background:#b0b0b0;"></div>
<div class="a" style="left:156px;top:60px;width:18px;height:2px;background:#b0b0b0;"></div>
<div class="a" style="left:188px;top:60px;width:12px;height:2px;background:#b0b0b0;"></div>
<div class="a" style="left:65px;top:66px;width:5px;height:5px;background:#2a8fb0;border-radius:50%"></div>
<div class="a" style="left:73px;top:68px;width:10px;height:2px;background:#909090;"></div>
<div class="a" style="left:156px;top:68px;width:27px;height:2px;background:#d0d0d0;"></div>
</div>
<svg style="left:288px;top:338px" width="14" height="18"><defs><linearGradient id="fi288" x1="0.3" y1="0" x2="0.5" y2="1"><stop offset="0" stop-color="#5ec4e0"/><stop offset="0.45" stop-color="#1e6fb0"/><stop offset="1" stop-color="#0c2870"/></linearGradient></defs><path d="M0.5 0.5H9.5L12.5 3.5V17.5H0.5Z" fill="#fff" stroke="#6f757c" stroke-width="1"/><rect x="2.5" y="4.8" width="8.5" height="8.8" fill="url(#fi288)"/></svg>
<div class="t" style="left:317px;top:330.5px;font-size:12px;color:#1b1b1b;-webkit-text-stroke:0.3px #1b1b1b;letter-spacing:-0.266px;">Screenshot (12)</div>
<div class="t" style="left:317px;top:346.5px;font-size:12px;color:#5e5e5e;letter-spacing:-0.273px;">Screenshots (C:\Users\shekh\O...</div>
<div class="a" style="left:512px;top:180px;width:227px;height:191.5px;background:#fff;border:1px solid #e6e6e6;border-bottom-color:#d4d4d4;border-radius:4px;box-shadow:0 1px 2px rgba(0,0,0,0.06)"></div>
<svg style="left:528px;top:197px" width="15" height="15"><rect x="0.6" y="0.6" width="13.8" height="13.8" rx="2" fill="none" stroke="#1f4d66" stroke-width="1.2"/><path d="M0.8 12L5.5 7L13.8 13.6" fill="none" stroke="#1f4d66" stroke-width="1.2"/><circle cx="10" cy="4.8" r="1.4" fill="none" stroke="#1f4d66" stroke-width="1.1"/></svg>
<div class="a" style="left:513px;top:228px;width:225px;height:95px;overflow:hidden;background:#fff">
<div class="a" style="left:7px;top:1px;width:3px;height:3px;background:#a3b8c4;"></div><div class="a" style="left:11px;top:1px;width:12px;height:2px;background:#c8ced3;"></div><div class="a" style="left:7px;top:8px;width:3px;height:3px;background:#a3b8c4;"></div><div class="a" style="left:11px;top:8px;width:20px;height:2px;background:#c8ced3;"></div><div class="a" style="left:7px;top:15px;width:3px;height:3px;background:#a3b8c4;"></div><div class="a" style="left:11px;top:15px;width:18px;height:2px;background:#c8ced3;"></div><div class="a" style="left:7px;top:29px;width:3px;height:3px;background:#a3b8c4;"></div><div class="a" style="left:11px;top:29px;width:14px;height:2px;background:#c8ced3;"></div><div class="a" style="left:38px;top:29px;width:2px;height:2px;background:#d0d0d0;"></div><div class="a" style="left:7px;top:37px;width:3px;height:3px;background:#a3b8c4;"></div><div class="a" style="left:11px;top:37px;width:16px;height:2px;background:#c8ced3;"></div><div class="a" style="left:38px;top:37px;width:2px;height:2px;background:#d0d0d0;"></div><div class="a" style="left:7px;top:43px;width:3px;height:3px;background:#a3b8c4;"></div><div class="a" style="left:11px;top:43px;width:12px;height:2px;background:#c8ced3;"></div><div class="a" style="left:38px;top:43px;width:2px;height:2px;background:#d0d0d0;"></div><div class="a" style="left:7px;top:51px;width:3px;height:3px;background:#a3b8c4;"></div><div class="a" style="left:11px;top:51px;width:14px;height:2px;background:#c8ced3;"></div><div class="a" style="left:38px;top:51px;width:2px;height:2px;background:#d0d0d0;"></div><div class="a" style="left:7px;top:58px;width:3px;height:3px;background:#a3b8c4;"></div><div class="a" style="left:11px;top:58px;width:18px;height:2px;background:#c8ced3;"></div><div class="a" style="left:38px;top:58px;width:2px;height:2px;background:#d0d0d0;"></div><div class="a" style="left:7px;top:65px;width:3px;height:3px;background:#a3b8c4;"></div><div class="a" style="left:11px;top:65px;width:16px;height:2px;background:#c8ced3;"></div><div class="a" style="left:38px;top:65px;width:2px;height:2px;background:#d0d0d0;"></div><div class="a" style="left:7px;top:72px;width:3px;height:3px;background:#a3b8c4;"></div><div class="a" style="left:11px;top:72px;width:14px;height:2px;background:#c8ced3;"></div><div class="a" style="left:7px;top:87px;width:3px;height:3px;background:#a3b8c4;"></div><div class="a" style="left:11px;top:87px;width:12px;height:2px;background:#c8ced3;"></div><div class="a" style="left:43px;top:3px;width:1px;height:92px;background:#d0d0d0;"></div>
<div class="a" style="left:0px;top:92px;width:42px;height:3px;background:#e6e6e6;"></div>
<div class="a" style="left:64px;top:72px;width:65px;height:23px;background:#f7f7f7;border:1px solid #e4e4e4"></div>
<div class="a" style="left:69px;top:85px;width:3px;height:3px;background:#888;"></div>
<div class="a" style="left:75px;top:85px;width:20px;height:2px;background:#999;"></div>
<div class="a" style="left:107px;top:85px;width:12px;height:2px;background:#bbb;"></div>
<div class="a" style="left:69px;top:92px;width:3px;height:3px;background:#666;"></div>
<div class="a" style="left:75px;top:92px;width:14px;height:2px;background:#aaa;"></div>
</div>
<svg style="left:528px;top:338px" width="14" height="18"><defs><linearGradient id="fi528" x1="0.3" y1="0" x2="0.5" y2="1"><stop offset="0" stop-color="#5ec4e0"/><stop offset="0.45" stop-color="#1e6fb0"/><stop offset="1" stop-color="#0c2870"/></linearGradient></defs><path d="M0.5 0.5H9.5L12.5 3.5V17.5H0.5Z" fill="#fff" stroke="#6f757c" stroke-width="1"/><rect x="2.5" y="4.8" width="8.5" height="8.8" fill="url(#fi528)"/></svg>
<div class="t" style="left:557px;top:330.5px;font-size:12px;color:#1b1b1b;-webkit-text-stroke:0.3px #1b1b1b;letter-spacing:-0.207px;">Screenshot (11)</div>
<div class="t" style="left:557px;top:346.5px;font-size:12px;color:#5e5e5e;letter-spacing:-0.273px;">Screenshots (C:\Users\shekh\O...</div>
<div class="a" style="left:752px;top:180px;width:227px;height:191.5px;background:#fff;border:1px solid #e6e6e6;border-bottom-color:#d4d4d4;border-radius:4px;box-shadow:0 1px 2px rgba(0,0,0,0.06)"></div>
<svg style="left:768px;top:197px" width="15" height="15"><rect x="0.6" y="0.6" width="13.8" height="13.8" rx="2" fill="none" stroke="#1f4d66" stroke-width="1.2"/><path d="M0.8 12L5.5 7L13.8 13.6" fill="none" stroke="#1f4d66" stroke-width="1.2"/><circle cx="10" cy="4.8" r="1.4" fill="none" stroke="#1f4d66" stroke-width="1.1"/></svg>
<div class="t" style="left:797px;top:188.5px;font-size:12px;color:#2b2b2b;letter-spacing:0.036px;">You recently took this photo</div>
<div class="t" style="left:797px;top:204px;font-size:12px;color:#5e5e5e">31-01-2025 00:20</div>
<div class="a" style="left:753px;top:228px;width:225px;height:95px;overflow:hidden;background:#fff">
<div class="a" style="left:7px;top:2px;width:3px;height:3px;background:#a3b8c4;"></div><div class="a" style="left:11px;top:2px;width:12px;height:2px;background:#c8ced3;"></div><div class="a" style="left:7px;top:9px;width:3px;height:3px;background:#a3b8c4;"></div><div class="a" style="left:11px;top:9px;width:20px;height:2px;background:#c8ced3;"></div><div class="a" style="left:7px;top:17px;width:3px;height:3px;background:#a3b8c4;"></div><div class="a" style="left:11px;top:17px;width:18px;height:2px;background:#c8ced3;"></div><div class="a" style="left:7px;top:23px;width:3px;height:3px;background:#a3b8c4;"></div><div class="a" style="left:11px;top:23px;width:14px;height:2px;background:#c8ced3;"></div><div class="a" style="left:7px;top:31px;width:3px;height:3px;background:#a3b8c4;"></div><div class="a" style="left:11px;top:31px;width:16px;height:2px;background:#c8ced3;"></div><div class="a" style="left:7px;top:38px;width:3px;height:3px;background:#a3b8c4;"></div><div class="a" style="left:11px;top:38px;width:12px;height:2px;background:#c8ced3;"></div><div class="a" style="left:7px;top:52px;width:3px;height:3px;background:#a3b8c4;"></div><div class="a" style="left:11px;top:52px;width:14px;height:2px;background:#c8ced3;"></div><div class="a" style="left:38px;top:52px;width:2px;height:2px;background:#d0d0d0;"></div><div class="a" style="left:7px;top:59px;width:3px;height:3px;background:#a3b8c4;"></div><div class="a" style="left:11px;top:59px;width:18px;height:2px;background:#c8ced3;"></div><div class="a" style="left:38px;top:59px;width:2px;height:2px;background:#d0d0d0;"></div><div class="a" style="left:7px;top:66px;width:3px;height:3px;background:#a3b8c4;"></div><div class="a" style="left:11px;top:66px;width:16px;height:2px;background:#c8ced3;"></div><div class="a" style="left:38px;top:66px;width:2px;height:2px;background:#d0d0d0;"></div><div class="a" style="left:7px;top:73px;width:3px;height:3px;background:#a3b8c4;"></div><div class="a" style="left:11px;top:73px;width:14px;height:2px;background:#c8ced3;"></div><div class="a" style="left:38px;top:73px;width:2px;height:2px;background:#d0d0d0;"></div><div class="a" style="left:7px;top:81px;width:3px;height:3px;background:#a3b8c4;"></div><div class="a" style="left:11px;top:81px;width:12px;height:2px;background:#c8ced3;"></div><div class="a" style="left:38px;top:81px;width:2px;height:2px;background:#d0d0d0;"></div><div class="a" style="left:7px;top:88px;width:3px;height:3px;background:#a3b8c4;"></div><div class="a" style="left:11px;top:88px;width:12px;height:2px;background:#c8ced3;"></div><div class="a" style="left:38px;top:88px;width:2px;height:2px;background:#d0d0d0;"></div><div class="a" style="left:44px;top:3px;width:1px;height:92px;background:#d0d0d0;"></div>
<div class="a" style="left:59px;top:3px;width:47px;height:42px;background:#fff;border:1px solid #9bb8d8"></div>
<div class="a" style="left:62px;top:6px;width:3px;height:3px;background:#777;"></div>
<div class="a" style="left:67px;top:6px;width:28px;height:2px;background:#aaa;"></div>
<div class="a" style="left:67px;top:9px;width:18px;height:2px;background:#bbb;"></div>
<div class="a" style="left:60px;top:14px;width:45px;height:21px;background:radial-gradient(ellipse 45% 80% at 58% 70%,#1148c0 0%,#2265dc 40%,#5b95e6 70%,rgba(180,205,235,1) 100%);"></div>
<div class="a" style="left:62px;top:38px;width:3px;height:3px;background:#555;"></div>
<div class="a" style="left:67px;top:38px;width:16px;height:2px;background:#777;"></div>
<div class="a" style="left:67px;top:41px;width:26px;height:2px;background:#e0a080;"></div>
<div class="a" style="left:105px;top:1px;width:76px;height:94px;background:#f8f8f8;border:1px solid #dedede"></div>
<div class="a" style="left:106px;top:32px;width:74px;height:6px;background:#e6e6e6;"></div>
<div class="a" style="left:109px;top:5px;width:3px;height:3px;background:#a5a5a5;"></div>
<div class="a" style="left:115px;top:5px;width:20px;height:2px;background:#b8b8b8;"></div>
<div class="a" style="left:109px;top:12px;width:3px;height:3px;background:#a5a5a5;"></div>
<div class="a" style="left:115px;top:12px;width:14px;height:2px;background:#b8b8b8;"></div>
<div class="a" style="left:109px;top:20px;width:3px;height:3px;background:#a5a5a5;"></div>
<div class="a" style="left:115px;top:20px;width:24px;height:2px;background:#b8b8b8;"></div>
<div class="a" style="left:109px;top:26px;width:3px;height:3px;background:#a5a5a5;"></div>
<div class="a" style="left:115px;top:26px;width:20px;height:2px;background:#b8b8b8;"></div>
<div class="a" style="left:109px;top:34px;width:3px;height:3px;background:#a5a5a5;"></div>
<div class="a" style="left:115px;top:34px;width:36px;height:2px;background:#b8b8b8;"></div>
<div class="a" style="left:109px;top:41px;width:3px;height:3px;background:#a5a5a5;"></div>
<div class="a" style="left:115px;top:41px;width:18px;height:2px;background:#b8b8b8;"></div>
<div class="a" style="left:109px;top:48px;width:3px;height:3px;background:#a5a5a5;"></div>
<div class="a" style="left:115px;top:48px;width:18px;height:2px;background:#b8b8b8;"></div>
<div class="a" style="left:109px;top:55px;width:3px;height:3px;background:#a5a5a5;"></div>
<div class="a" style="left:115px;top:55px;width:16px;height:2px;background:#b8b8b8;"></div>
<div class="a" style="left:109px;top:64px;width:3px;height:3px;background:#a5a5a5;"></div>
<div class="a" style="left:115px;top:64px;width:32px;height:2px;background:#b8b8b8;"></div>
<div class="a" style="left:109px;top:71px;width:3px;height:3px;background:#a5a5a5;"></div>
<div class="a" style="left:115px;top:71px;width:16px;height:2px;background:#b8b8b8;"></div>
<div class="a" style="left:109px;top:79px;width:3px;height:3px;background:#a5a5a5;"></div>
<div class="a" style="left:115px;top:79px;width:14px;height:2px;background:#b8b8b8;"></div>
<div class="a" style="left:109px;top:88px;width:3px;height:3px;background:#a5a5a5;"></div>
<div class="a" style="left:115px;top:88px;width:18px;height:2px;background:#b8b8b8;"></div>
<div class="a" style="left:107px;top:61px;width:72px;height:1px;background:#e2e2e2;"></div>
<div class="a" style="left:163px;top:48px;width:12px;height:2px;background:#c0c0c0;"></div>
<div class="a" style="left:163px;top:55px;width:10px;height:2px;background:#c0c0c0;"></div>
<div class="a" style="left:181px;top:3px;width:40px;height:42px;background:#fff;border:1px solid #ececec"></div>
<div class="a" style="left:184px;top:6px;width:28px;height:2px;background:#aaa;"></div>
<div class="a" style="left:184px;top:9px;width:14px;height:2px;background:#bbb;"></div>
<div class="a" style="left:187px;top:21px;width:7px;height:6px;background:#2f6fb0;"></div>
<div class="a" style="left:184px;top:38px;width:12px;height:2px;background:#888;"></div>
<div class="a" style="left:184px;top:41px;width:32px;height:2px;background:#e0a080;"></div>
<div class="a" style="left:223px;top:4px;width:3px;height:39px;background:#eee;"></div>
<div class="a" style="left:50px;top:51px;width:4px;height:1px;background:#888;"></div>
<div class="a" style="left:58px;top:48px;width:20px;height:7px;background:#2766ad;border-radius:4px"></div>
<div class="a" style="left:82px;top:48px;width:22px;height:7px;background:#f2f2f2;border-radius:4px"></div>
<div class="a" style="left:66px;top:60px;width:10px;height:2px;background:#999;"></div>
<div class="a" style="left:195px;top:60px;width:12px;height:2px;background:#aaa;"></div>
<div class="a" style="left:58px;top:67px;width:5px;height:5px;background:#fff;border:1px solid #aaa;border-radius:50%"></div>
<div class="a" style="left:72px;top:68px;width:20px;height:2px;background:#a5a5a5;"></div>
<div class="a" style="left:58px;top:74px;width:5px;height:5px;background:#fff;border:1px solid #aaa;border-radius:50%"></div>
<div class="a" style="left:72px;top:75px;width:20px;height:2px;background:#a5a5a5;"></div>
<div class="a" style="left:58px;top:81px;width:5px;height:5px;background:#fff;border:1px solid #aaa;border-radius:50%"></div>
<div class="a" style="left:72px;top:82px;width:20px;height:2px;background:#a5a5a5;"></div>
<div class="a" style="left:58px;top:88px;width:5px;height:5px;background:#fff;border:1px solid #aaa;border-radius:50%"></div>
<div class="a" style="left:72px;top:89px;width:20px;height:2px;background:#a5a5a5;"></div>
<div class="a" style="left:66px;top:65px;width:6px;height:5px;background:#2a5a9a;"></div>
</div>
<svg style="left:768px;top:338px" width="14" height="18"><defs><linearGradient id="fi768" x1="0.3" y1="0" x2="0.5" y2="1"><stop offset="0" stop-color="#5ec4e0"/><stop offset="0.45" stop-color="#1e6fb0"/><stop offset="1" stop-color="#0c2870"/></linearGradient></defs><path d="M0.5 0.5H9.5L12.5 3.5V17.5H0.5Z" fill="#fff" stroke="#6f757c" stroke-width="1"/><rect x="2.5" y="4.8" width="8.5" height="8.8" fill="url(#fi768)"/></svg>
<div class="t" style="left:797px;top:330.5px;font-size:12px;color:#1b1b1b;-webkit-text-stroke:0.3px #1b1b1b;letter-spacing:-0.266px;">Screenshot (10)</div>
<div class="t" style="left:797px;top:346.5px;font-size:12px;color:#5e5e5e;letter-spacing:-0.273px;">Screenshots (C:\Users\shekh\O...</div>
<div class="a" style="left:992px;top:180px;width:227px;height:191.5px;background:#fff;border:1px solid #e6e6e6;border-bottom-color:#d4d4d4;border-radius:4px;box-shadow:0 1px 2px rgba(0,0,0,0.06)"></div>
<svg style="left:1008px;top:197px" width="15" height="15"><rect x="0.6" y="0.6" width="13.8" height="13.8" rx="2" fill="none" stroke="#1f4d66" stroke-width="1.2"/><path d="M0.8 12L5.5 7L13.8 13.6" fill="none" stroke="#1f4d66" stroke-width="1.2"/><circle cx="10" cy="4.8" r="1.4" fill="none" stroke="#1f4d66" stroke-width="1.1"/></svg>
<div class="a" style="left:993px;top:228px;width:225px;height:95px;overflow:hidden;background:#fff">
<div class="a" style="left:0px;top:0px;width:31px;height:95px;background:linear-gradient(180deg,#a7bfdc,#b9cde6);"></div>
<div class="a" style="left:11px;top:34px;width:30px;height:62px;background:radial-gradient(ellipse 26px 40px at 100% 75%,#0d47c8 0%,#1f6ae6 50%,#5b9bee 75%,rgba(150,190,235,0) 100%);"></div>
</div>
<svg style="left:1008px;top:338px" width="14" height="18"><defs><linearGradient id="fi1008" x1="0.3" y1="0" x2="0.5" y2="1"><stop offset="0" stop-color="#5ec4e0"/><stop offset="0.45" stop-color="#1e6fb0"/><stop offset="1" stop-color="#0c2870"/></linearGradient></defs><path d="M0.5 0.5H9.5L12.5 3.5V17.5H0.5Z" fill="#fff" stroke="#6f757c" stroke-width="1"/><rect x="2.5" y="4.8" width="8.5" height="8.8" fill="url(#fi1008)"/></svg>
<!--/CARDS-->
<svg style="left:237px;top:394px" width="14" height="8"><path d="M0.6 0.6L7 7L13.4 0.6" fill="none" stroke="#444" stroke-width="1.1"/></svg>
<div class="a" style="left:268px;top:383px;width:89px;height:31px;border-radius:16px;background:#f3f3f3"></div>
<svg style="left:280px;top:390px" width="16" height="16"><circle cx="8" cy="8" r="7.2" fill="none" stroke="#333" stroke-width="1.1"/><path d="M8 3.8V8.3H11" fill="none" stroke="#333" stroke-width="1.1"/></svg>
<div class="t" style="left:304px;top:389px;font-size:13.5px;color:#1b1b1b;font-weight:normal;letter-spacing:-0.297px;">Recent</div>
<div class="a" style="left:366px;top:383px;width:103px;height:31px;border-radius:16px;background:#0c67bf"></div>
<svg style="left:377px;top:389px" width="18" height="17"><path d="M9 1L11.3 6.1L16.8 6.6L12.6 10.2L13.9 15.7L9 12.8L4.1 15.7L5.4 10.2L1.2 6.6L6.7 6.1Z" fill="none" stroke="#fff" stroke-width="1.2" stroke-linejoin="round"/></svg>
<div class="t" style="left:402px;top:389px;font-size:13.5px;color:#ffffff;font-weight:normal;letter-spacing:-0.059px;">Favorites</div>
<div class="a" style="left:478px;top:383px;width:89px;height:31px;border-radius:16px;background:#f3f3f3"></div>
<svg style="left:488px;top:390px" width="18" height="16"><circle cx="6" cy="4.5" r="3.5" fill="none" stroke="#333" stroke-width="1.1"/><path d="M0.6 15V12.5Q0.6 9.5 3.6 9.5H8.5Q11.4 9.5 11.4 12.5V15" fill="none" stroke="#333" stroke-width="1.1"/><circle cx="13.3" cy="5.5" r="2.6" fill="none" stroke="#333" stroke-width="1.1"/><path d="M12.5 10H15Q17.4 10 17.4 12.5V14" fill="none" stroke="#333" stroke-width="1.1"/></svg>
<div class="t" style="left:512px;top:389px;font-size:13.5px;color:#1b1b1b;font-weight:normal;letter-spacing:-0.258px;">Shared</div>
<div class="t" style="left:299px;top:430px;font-size:13.5px;color:#1b1b1b;font-weight:normal;">Name</div>
<div class="t" style="left:563px;top:430px;font-size:13.5px;color:#1b1b1b;font-weight:normal;letter-spacing:-0.193px;">Date accessed</div>
<div class="t" style="left:712px;top:430px;font-size:13.5px;color:#1b1b1b;font-weight:normal;letter-spacing:0.027px;">File location</div>
<div class="t" style="left:861px;top:430px;font-size:13.5px;color:#1b1b1b;font-weight:normal;letter-spacing:0.154px;">Activity</div>
<svg style="left:300px;top:463px" width="24" height="24" viewBox="0 0 24 24"><defs><linearGradient id="leb" x1="0" y1="0.2" x2="0.8" y2="1"><stop offset="0" stop-color="#1c9ee6"/><stop offset="1" stop-color="#0b4c9e"/></linearGradient><linearGradient id="leg" x1="0" y1="0.2" x2="1" y2="0.6"><stop offset="0" stop-color="#1a8ed8"/><stop offset="0.5" stop-color="#22b4b0"/><stop offset="1" stop-color="#4cd648"/></linearGradient></defs><circle cx="12" cy="12" r="11.8" fill="url(#leb)"/><path d="M0.6 10Q2 0.4 12 0.2Q21.5 0.3 23.7 9.5Q24.5 15.8 19.5 16.6Q15.8 17 14.4 14.6Q16.4 11.8 14 9.2Q10.5 6.8 5.5 8.6Q2.5 9.8 0.6 10Z" fill="url(#leg)"/><circle cx="10.6" cy="13.2" r="3.6" fill="#fff"/><path d="M8.5 16.5Q13.5 20.8 23.2 17.2L23.6 15.8Q19 17.6 14.4 14.6L12 15Z" fill="#fff"/><path d="M23.2 17.2Q19.5 23.8 12 23.9L24 24Z" fill="#fff"/></svg>
<div class="t" style="left:336px;top:466px;font-size:12.5px;color:#1b1b1b;font-weight:normal;">msedge</div>
<div class="t" style="left:711px;top:466px;font-size:11.5px;color:#5f5f5f;font-weight:normal;">Local Disk (C:)\Progra...</div>
<div class="a" style="left:554px;top:129px;width:160px;height:178px;background:#f9f9f9;border:1px solid #d6d6d6;border-radius:8px;box-shadow:0 4px 10px rgba(0,0,0,0.12);overflow:hidden">
<div class="a" style="left:0;top:146px;width:160px;height:27px;background:#f9e08a"></div>
<div class="a" style="left:0;top:105px;width:160px;height:1px;background:#e3e3e3"></div>
</div>
<svg style="left:567px;top:141px" width="17" height="17"><rect x="0.3999999999999999" y="0.3999999999999999" width="6.8" height="6.8" rx="1.4" fill="#e6f1fa" stroke="#2a6cb0" stroke-width="1" stroke-dasharray="1.5 1.2"/><circle cx="3.8" cy="3.8" r="2.5" fill="#1f6fbf"/><rect x="8.9" y="0.3999999999999999" width="6.8" height="6.8" rx="1.4" fill="#e6f1fa" stroke="#2a6cb0" stroke-width="1" stroke-dasharray="1.5 1.2"/><circle cx="12.3" cy="3.8" r="2.5" fill="#1f6fbf"/><rect x="0.3999999999999999" y="8.9" width="6.8" height="6.8" rx="1.4" fill="#e6f1fa" stroke="#2a6cb0" stroke-width="1" stroke-dasharray="1.5 1.2"/><circle cx="3.8" cy="12.3" r="2.5" fill="#1f6fbf"/><rect x="8.9" y="8.9" width="6.8" height="6.8" rx="1.4" fill="#e6f1fa" stroke="#2a6cb0" stroke-width="1" stroke-dasharray="1.5 1.2"/><circle cx="12.3" cy="12.3" r="2.5" fill="#1f6fbf"/></svg>
<svg style="left:567px;top:173px" width="17" height="17"><rect x="1.0999999999999996" y="1.0999999999999996" width="5.4" height="5.4" rx="1.2" fill="none" stroke="#444" stroke-width="1"/><rect x="9.600000000000001" y="1.0999999999999996" width="5.4" height="5.4" rx="1.2" fill="none" stroke="#444" stroke-width="1"/><rect x="1.0999999999999996" y="9.600000000000001" width="5.4" height="5.4" rx="1.2" fill="none" stroke="#444" stroke-width="1"/><rect x="9.600000000000001" y="9.600000000000001" width="5.4" height="5.4" rx="1.2" fill="none" stroke="#444" stroke-width="1"/></svg>
<svg style="left:567px;top:205px" width="17" height="17"><rect x="1.0999999999999996" y="1.0999999999999996" width="5.4" height="5.4" rx="1.2" fill="none" stroke="#444" stroke-width="1"/><rect x="8.9" y="0.3999999999999999" width="6.8" height="6.8" rx="1.4" fill="#e6f1fa" stroke="#2a6cb0" stroke-width="1" stroke-dasharray="1.5 1.2"/><circle cx="12.3" cy="3.8" r="2.5" fill="#1f6fbf"/><rect x="0.3999999999999999" y="8.9" width="6.8" height="6.8" rx="1.4" fill="#e6f1fa" stroke="#2a6cb0" stroke-width="1" stroke-dasharray="1.5 1.2"/><circle cx="3.8" cy="12.3" r="2.5" fill="#1f6fbf"/><rect x="9.600000000000001" y="9.600000000000001" width="5.4" height="5.4" rx="1.2" fill="none" stroke="#444" stroke-width="1"/></svg>
<div class="t" style="left:593px;top:139px;font-size:14px;color:#1b1b1b;font-weight:normal;letter-spacing:-0.321px;">Select all</div>
<div class="t" style="left:593px;top:171px;font-size:14px;color:#1b1b1b;font-weight:normal;">Select none</div>
<div class="t" style="left:593px;top:203px;font-size:14px;color:#1b1b1b;font-weight:normal;letter-spacing:-0.073px;">Invert selection</div>
<svg style="left:567px;top:246px" width="16" height="16"><path d="M1.5 14.5L8 8Q6.5 4 9.5 1.5Q11.5 0.3 13.5 1L10.8 3.8L12.2 5.2L15 2.5Q15.7 4.5 14.5 6.5Q12 9.5 8 8" fill="none" stroke="#b0b0b0" stroke-width="1.1" stroke-linejoin="round"/><path d="M1.5 14.5Q0.5 13.5 1.5 12.5L6.5 7.5" fill="none" stroke="#b0b0b0" stroke-width="1.1"/></svg>
<div class="t" style="left:593px;top:244px;font-size:14px;color:#a5a5a5;font-weight:normal;">Properties</div>
<svg style="left:567px;top:279px" width="16" height="16"><path d="M8 0.8L9.6 1.2L10 3.2L11.8 4.2L13.7 3.5L14.8 4.8L14.2 6.7L15.2 8.4L15.2 8L14.2 9.6L14.8 11.4L13.7 12.7L11.8 12L10 13L9.6 14.9L8 15.2L6.4 14.9L6 13L4.2 12L2.3 12.7L1.2 11.4L1.8 9.6L0.8 8L1.8 6.4L1.2 4.6L2.3 3.3L4.2 4L6 3L6.4 1.1Z" fill="none" stroke="#6b6130" stroke-width="1.1" stroke-linejoin="round"/><circle cx="8" cy="8" r="2.5" fill="none" stroke="#6b6130" stroke-width="1.1"/></svg>
<div class="t" style="left:593px;top:276px;font-size:14px;color:#5a5226;font-weight:normal;">Options</div>

</body></html>
